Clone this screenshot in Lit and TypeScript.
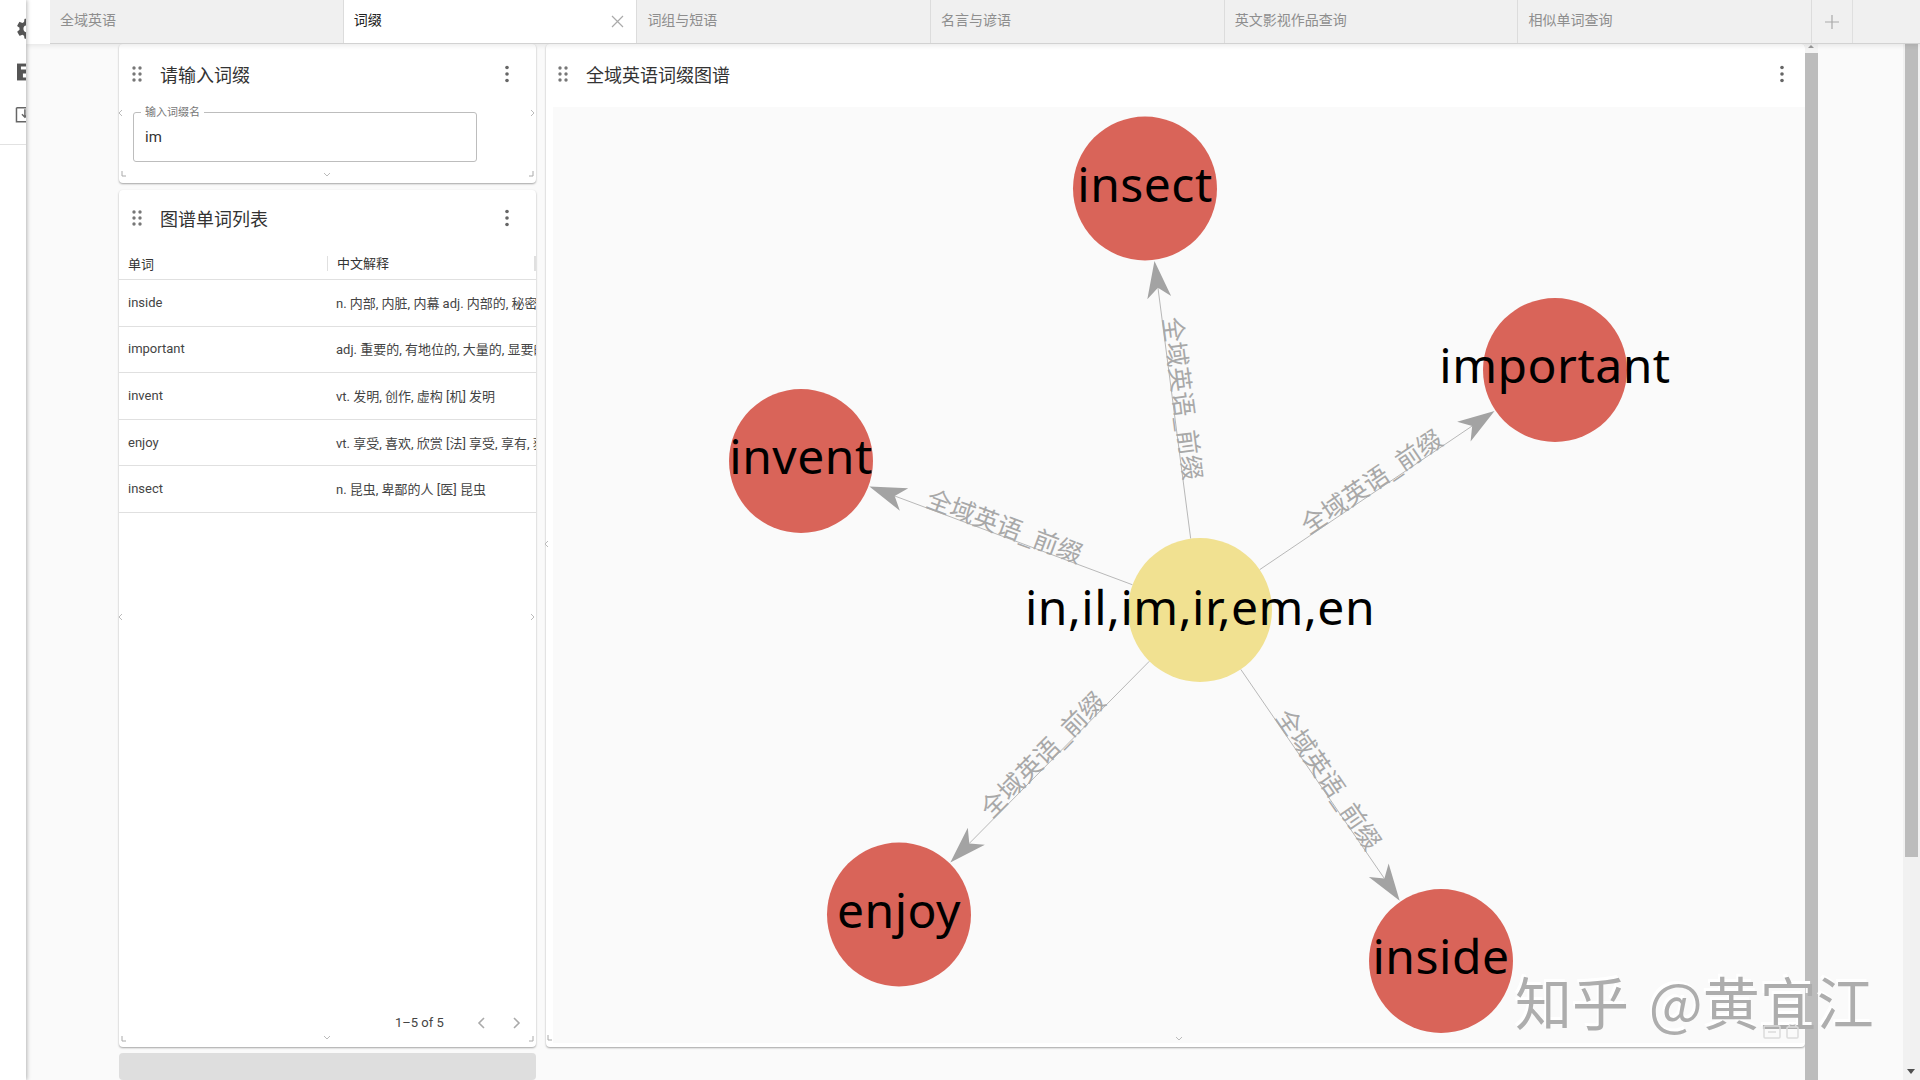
import { LitElement, html, svg, css } from "lit";
import { customElement } from "lit/decorators.js";

const CENTER = { x: 1200, y: 610 };
const R = 72;
const TARGETS = [
  { name: "insect", x: 1145, y: 188.5 },
  { name: "important", x: 1555, y: 370 },
  { name: "invent", x: 801, y: 461 },
  { name: "enjoy", x: 899, y: 914.5 },
  { name: "inside", x: 1441, y: 961 },
];
const TABS = ["全域英语", "词缀", "词组与短语", "名言与谚语", "英文影视作品查询", "相似单词查询"];
const ROWS = [
  ["inside", "n. 内部, 内脏, 内幕 adj. 内部的, 秘密的, 里面的"],
  ["important", "adj. 重要的, 有地位的, 大量的, 显要的, 重大的"],
  ["invent", "vt. 发明, 创作, 虚构 [机] 发明"],
  ["enjoy", "vt. 享受, 喜欢, 欣赏 [法] 享受, 享有, 获得"],
  ["insect", "n. 昆虫, 卑鄙的人 [医] 昆虫"],
];

function edge(t: { x: number; y: number }) {
  const dx = t.x - CENTER.x, dy = t.y - CENTER.y;
  const len = Math.hypot(dx, dy);
  const ux = dx / len, uy = dy / len;
  const sx = CENTER.x + ux * R, sy = CENTER.y + uy * R;
  const tx = t.x - ux * (R + 1), ty = t.y - uy * (R + 1);
  const lx = tx - ux * 27, ly = ty - uy * 27;
  const deg = (Math.atan2(dy, dx) * 180) / Math.PI;
  let rot = deg;
  if (rot > 90) rot -= 180;
  if (rot <= -90) rot += 180;
  const mx = (sx + tx) / 2, my = (sy + ty) / 2;
  return svg`
    <line x1=${sx} y1=${sy} x2=${lx} y2=${ly} stroke="#b8b8b8" stroke-width="1"></line>
    <polygon transform="translate(${tx} ${ty}) rotate(${deg})" points="0,0 -37,-12 -27,0 -37,12" fill="#a3a3a3"></polygon>
    <text class="edge-label" transform="translate(${mx} ${my}) rotate(${rot})" y="-1" text-anchor="middle">全域英语_前缀</text>`;
}

const dragIcon = html`<svg class="drag" width="12" height="18" viewBox="0 0 12 18"><g fill="#777"><circle cx="3" cy="3" r="1.7"/><circle cx="9" cy="3" r="1.7"/><circle cx="3" cy="9" r="1.7"/><circle cx="9" cy="9" r="1.7"/><circle cx="3" cy="15" r="1.7"/><circle cx="9" cy="15" r="1.7"/></g></svg>`;
const moreIcon = html`<svg class="more" width="4" height="18" viewBox="0 0 4 18"><g fill="#666"><circle cx="2" cy="2.5" r="1.8"/><circle cx="2" cy="9" r="1.8"/><circle cx="2" cy="15.5" r="1.8"/></g></svg>`;

@customElement("app-root")
export class AppRoot extends LitElement {
  static styles = css`
    :host { display: block; width: 1920px; height: 1080px; position: relative; overflow: hidden; background: #fafafa;
      font-family: Roboto, "Noto Sans CJK SC", sans-serif; color: #333; }
    * { box-sizing: border-box; }
    .app { display: flex; width: 1920px; height: 1080px; }
    .side { width: 26px; flex: none; background: #fff; box-shadow: 1px 0 4px rgba(0,0,0,.28); position: relative; z-index: 3; }
    .side-icons { display: block; height: 145px; border-bottom: 1px solid #e2e2e2; width: 26px; overflow: hidden; }
    .main { flex: 1; display: flex; flex-direction: column; min-width: 0; }
    .top { height: 44px; flex: none; display: flex; padding-left: 24px; background: #fff; position: relative; z-index: 2;
      box-shadow: 0 2px 5px rgba(0,0,0,.08); }
    .strip { flex: 1; display: flex; background: #f0f0f0; border-bottom: 1.5px solid #d2d2d2; }
    .tab { width: 293.7px; flex: none; padding: 0 12px 5px 10px; display: flex; align-items: center; justify-content: space-between;
      font-size: 14px; color: #8e8e8e; border-right: 1px solid #dcdcdc; }
    .tab.on { background: #fff; color: #222; }
    .tab svg { margin-top: 5px; }
    .plus { width: 41px; flex: none; display: flex; align-items: center; justify-content: center; border-right: 1px solid #dfdfdf; }
    .body { flex: 1; display: flex; min-height: 0; padding-left: 93px; }
    .col { width: 417px; flex: none; display: flex; flex-direction: column; gap: 7px; margin-right: 10px; }
    .card { background: #fff; border-radius: 4px; box-shadow: 0 1px 2px rgba(0,0,0,.35); position: relative; display: flex; flex-direction: column; }
    .c1 { height: 139px; flex: none; }
    .c2 { height: 857px; flex: none; }
    .c3 { flex: 1; background: #dedede; box-shadow: none; margin-top: -1px; }
    .head { display: flex; align-items: center; height: 60px; flex: none; padding: 0 27px 0 12px; }
    .c2 .head { height: 56px; }
    .title { font-size: 18px; color: #333; margin-left: 17px; flex: 1; white-space: nowrap; }
    .drag, .more { flex: none; display: block; }
    .field { margin: 8px 0 0 14px; width: 344px; height: 50px; border: 1px solid #bdbdbd; border-radius: 3px; position: relative;
      display: flex; align-items: center; padding-left: 11px; font-size: 15px; color: #333; }
    .legend { position: absolute; left: 7px; top: -7px; padding: 0 4px; background: #fff; font-size: 11px; line-height: 13px; color: #777; }
    .thead { display: flex; height: 34px; flex: none; align-items: center; border-bottom: 1px solid #e0e0e0; font-size: 13px; color: #333; padding-top: 1px; }
    .row { display: flex; height: 46.6px; flex: none; align-items: center; border-bottom: 1px solid #e0e0e0; font-size: 13px; color: #444; overflow: hidden; white-space: nowrap; padding-bottom: 1px; }
    .k { width: 208px; flex: none; padding-left: 9px; }
    .v { flex: 1; padding-left: 9px; overflow: hidden; min-width: 0; }
    .thead .v { border-left: 1px solid #e0e0e0; height: 15px; line-height: 15px; border-right: 2px solid #e0e0e0; }
    .foot { margin-top: auto; height: 46px; flex: none; display: flex; align-items: center; padding: 0 14px 3px 276px; font-size: 13px; color: #444; white-space: nowrap; }
    .foot span { flex: 1; }
    .pager { display: flex; gap: 26px; margin-left: -2px; }
    .graph-card { width: 1259px; height: 1003px; flex: none; }
    .graph-card .head { height: 63px; padding: 0 21px 3px 11px; }
    .graph-card .title { margin-left: 17px; }
    .graph { flex: 1; margin: 0 0 4px 7px; background: #fafafa; position: relative; overflow: visible; }
    .graph svg { position: absolute; left: 0; top: 0; overflow: visible; }
    .edge-label { font: 25px "Noto Sans CJK SC", sans-serif; fill: #a8a8a8; }
    .node-label { font: 48px "Noto Sans", sans-serif; letter-spacing: 0.5px; fill: #000; text-anchor: middle; }
    .bar { width: 13px; height: 1036px; flex: none; background: #bcbcbc; position: relative; }
    .bar::before { content: ""; display: block; height: 9px; background: #f4f4f4; }
    .bar::after { content: ""; position: absolute; left: 3px; top: 1px; border: 3px solid transparent; border-bottom: 3px solid #999; border-top: 0; }
    .gap { flex: 1; }
    .track { width: 17px; flex: none; background: #f1f1f1; padding: 0 2px; position: relative; }
    .thumb { height: 813px; background: #bcbcbc; }
    .arrow { position: absolute; left: 4px; bottom: 6px; width: 0; height: 0; border: 4px solid transparent; border-top: 5px solid #505050; border-bottom: 0; }
    .h { position: absolute; display: block; z-index: 1; }
    .wm { position: absolute; left: 1515px; top: 964px; font: 57px/72px "Noto Sans CJK SC", sans-serif; color: #adadad; white-space: nowrap; z-index: 5;
      text-shadow: -2px -3px 0 #fff; letter-spacing: 0; word-spacing: 7px; }
    .tools { position: absolute; left: 1763px; top: 1024px; z-index: 6; }
  `;

  private ch(x: number, y: number, dir: "l" | "r" | "d") {
    const d = dir === "l" ? "M4 1 1 4l3 3" : dir === "r" ? "M1 1l3 3-3 3" : "M1 1l3 3 3-3";
    return html`<svg class="h" style="left:${x - 3}px;top:${y - 4}px" width="8" height="8" viewBox="0 0 8 8"><path d=${d} fill="none" stroke="#bbb" stroke-width="1"/></svg>`;
  }
  private corner(x: number, y: number, right: boolean) {
    const d = right ? "M6 1v5H2" : "M1 1v5h4";
    return html`<svg class="h" style="left:${x - 3}px;top:${y - 3}px" width="7" height="7" viewBox="0 0 7 7"><path d=${d} fill="none" stroke="#aaa" stroke-width="1"/></svg>`;
  }

  render() {
    return html`
      <div class="app">
        <aside class="side">
          <svg class="side-icons" viewBox="0 0 26 145">
            <g transform="translate(15 17)" fill="#555">
              <path d="M19.4 13c.04-.3.1-.65.1-1s-.03-.68-.08-1l2.1-1.65a.5.5 0 0 0 .12-.64l-2-3.46a.5.5 0 0 0-.6-.22l-2.5 1a7 7 0 0 0-1.7-.98l-.37-2.65A.5.5 0 0 0 14 2h-4a.5.5 0 0 0-.5.42l-.37 2.65c-.6.25-1.17.58-1.7.98l-2.5-1a.5.5 0 0 0-.6.22l-2 3.46a.5.5 0 0 0 .12.64L4.57 11c-.04.32-.07.66-.07 1s.03.68.07 1l-2.1 1.65a.5.5 0 0 0-.12.64l2 3.46c.12.22.38.3.6.22l2.5-1c.52.4 1.08.73 1.7.98l.37 2.65c.04.24.25.42.5.42h4c.25 0 .46-.18.5-.42l.37-2.65c.6-.25 1.17-.58 1.7-.98l2.5 1c.22.08.48 0 .6-.22l2-3.46a.5.5 0 0 0-.12-.64L19.4 13zM12 15.5a3.5 3.5 0 1 1 0-7 3.5 3.5 0 0 1 0 7z"/>
            </g>
            <path d="M17 64h12v17H17z" fill="#555"/>
            <path d="M21 67h7v3h-7zM23 74h6v4h-6z" fill="#fff"/>
            <path d="M16.500 108.500v14h12M16.500 108.500h12M25 110v8M22 115l3 3 3-3" fill="none" stroke="#666" stroke-width="1.500"/>
          </svg>
        </aside>
        <div class="main">
          <div class="top">
            <div class="strip">
              ${TABS.map((t, i) => html`<div class="tab ${i === 1 ? "on" : ""}"><span>${t}</span>${i === 1 ? html`<svg width="13" height="13" viewBox="0 0 13 13"><path d="M1 1l11 11M12 1 1 12" stroke="#aaa" stroke-width="1.200"/></svg>` : ""}</div>`)}
              <div class="plus"><svg width="14" height="14" viewBox="0 0 14 14"><path d="M7 0v14M0 7h14" stroke="#aaa" stroke-width="1.200"/></svg></div>
            </div>
          </div>
          <div class="body">
            <div class="col">
              <section class="card c1">
                <div class="head">${dragIcon}<div class="title">请输入词缀</div>${moreIcon}</div>
                <div class="field"><span class="legend">输入词缀名</span>im</div>
                ${this.ch(2, 69, "l")}${this.ch(414, 69, "r")}${this.corner(5, 129, false)}${this.corner(411, 129, true)}${this.ch(207, 132, "d")}
              </section>
              <section class="card c2">
                <div class="head">${dragIcon}<div class="title">图谱单词列表</div>${moreIcon}</div>
                <div class="thead"><div class="k">单词</div><div class="v">中文解释</div></div>
                ${ROWS.map((r) => html`<div class="row"><div class="k">${r[0]}</div><div class="v">${r[1]}</div></div>`)}
                <div class="foot"><span>1–5 of 5</span>
                  <div class="pager">
                    <svg width="10" height="14" viewBox="0 0 10 14"><path d="M8 2 3 7l5 5" fill="none" stroke="#aaa" stroke-width="1.600"/></svg>
                    <svg width="10" height="14" viewBox="0 0 10 14"><path d="M2 2l5 5-5 5" fill="none" stroke="#aaa" stroke-width="1.600"/></svg>
                  </div>
                </div>
                ${this.ch(2, 427, "l")}${this.ch(414, 427, "r")}${this.corner(5, 848, false)}${this.corner(411, 848, true)}${this.ch(207, 849, "d")}
              </section>
              <div class="card c3"></div>
            </div>
            <section class="card graph-card">
              <div class="head">${dragIcon}<div class="title">全域英语词缀图谱</div>${moreIcon}</div>
              <div class="graph">
                <svg width="1252" height="936" viewBox="553 107 1252 936">
                  ${TARGETS.map((t) => edge(t))}
                  <circle cx=${CENTER.x} cy=${CENTER.y} r=${R} fill="#f1e191"></circle>
                  ${TARGETS.map((t) => svg`<circle cx=${t.x} cy=${t.y} r=${R} fill="#d96459"></circle>`)}
                  <text class="node-label" x=${CENTER.x} y="625">in,il,im,ir,em,en</text>
                  ${TARGETS.map((t) => svg`<text class="node-label" x=${t.x} y=${t.y + 13}>${t.name}</text>`)}
                </svg>
              </div>
              ${this.ch(1, 500, "l")}${this.corner(4, 993, false)}${this.ch(632, 996, "d")}
            </section>
            <div class="bar"></div>
            <div class="gap"></div>
            <div class="track"><div class="thumb"></div><div class="arrow"></div></div>
          </div>
        </div>
      </div>
      <div class="wm">知乎 @黄宜江</div>
      <svg class="tools" width="36" height="16" viewBox="0 0 36 16"><g fill="none" stroke="#dcdcdc" stroke-width="1.500"><rect x="1" y="2" width="16" height="12" rx="1"/><rect x="24" y="3" width="11" height="11" rx="1"/><path d="M5 8h8M26 3a3 3 0 0 1 7 0"/></g></svg>
    `;
  }
}
